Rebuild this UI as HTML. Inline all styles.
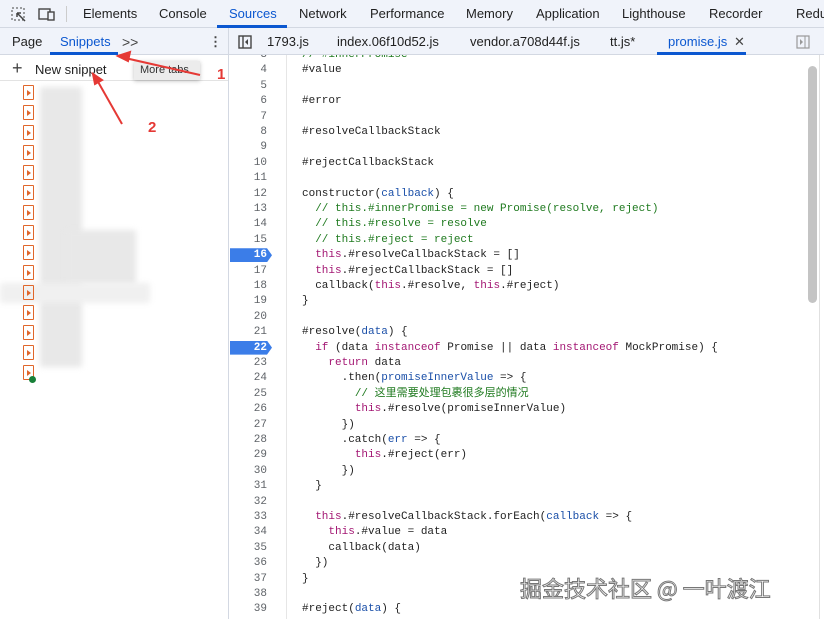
<!DOCTYPE html>
<html><head><meta charset="utf-8"><style>
*{box-sizing:border-box;margin:0;padding:0}
body{width:824px;height:619px;overflow:hidden;background:#fff;font-family:"Liberation Sans",Arial,sans-serif;font-size:13px;color:#1f1f1f;position:relative}
.top{position:absolute;left:0;top:0;width:824px;height:28px;background:#f0f3fa;border-bottom:1px solid #d3d8e2}
.top span{position:absolute;top:6px}
.sub{position:absolute;top:28px;height:27px;background:#f0f3fa;border-bottom:1px solid #d3d8e2}
.sub span{position:absolute;top:6px}
.left{position:absolute;left:0;top:55px;width:229px;height:564px;border-right:1px solid #d3d8e2}
.code{position:absolute;left:230px;top:55px;width:590px;height:564px;overflow:hidden;font-family:"Liberation Mono","Noto Sans CJK SC",monospace;font-size:11px;line-height:14px}
.ln{position:absolute;left:0;width:37px;text-align:right;color:#5f6368}
.tx{position:absolute;left:72px;white-space:pre;color:#1f1f1f;height:14px}
.k{color:#a31773}.c{color:#1f7a1f}.p{color:#1a4fa8}
.bp{position:absolute;left:0;width:42px;height:14px;background:#3b7de8;clip-path:polygon(0 0,37px 0,42px 50%,37px 100%,0 100%)}
.ic{position:absolute;left:23px;width:11px;height:15px;border:1.6px solid #e0662a;border-radius:1px}
.ic:after{content:"";position:absolute;left:3px;top:3.5px;border-left:4px solid #e0662a;border-top:3px solid transparent;border-bottom:3px solid transparent}
.blur{position:absolute;background:#e8e8e8;filter:blur(3px)}
</style></head><body>
<div class="top">
<svg style="position:absolute;left:11px;top:7px" width="16" height="15"><rect x="1" y="1" width="12" height="12" fill="none" stroke="#444" stroke-dasharray="2 2"/><path d="M6 6l8 8M6 6h4M6 6v4" stroke="#444" stroke-width="1.5" fill="none"/></svg>
<svg style="position:absolute;left:38px;top:7px" width="18" height="14"><rect x="1" y="2" width="11" height="10" fill="none" stroke="#444" stroke-width="1.4"/><rect x="10" y="5" width="6" height="8" fill="#f0f3fa" stroke="#444" stroke-width="1.4"/></svg>
<div style="position:absolute;left:66px;top:6px;width:1px;height:16px;background:#ccc"></div>
<span style="left:83px">Elements</span><span style="left:159px">Console</span><span style="left:229px;color:#0b57d0">Sources</span>
<div style="position:absolute;left:217px;top:25px;width:70px;height:3px;background:#0b57d0"></div>
<span style="left:299px">Network</span><span style="left:370px">Performance</span><span style="left:466px">Memory</span><span style="left:536px">Application</span><span style="left:622px">Lighthouse</span><span style="left:709px">Recorder</span><span style="left:796px">Redu</span>
</div>
<div class="sub" style="left:0;width:229px;border-right:1px solid #d3d8e2">
<span style="left:12px">Page</span><span style="left:60px;color:#0b57d0">Snippets</span>
<div style="position:absolute;left:50px;top:24px;width:68px;height:3px;background:#0b57d0"></div>
<span style="left:122px;font-size:14px;color:#444">&gt;&gt;</span>
<span style="left:209px;font-weight:bold;color:#444">⋮</span>
</div>
<div class="sub" style="left:229px;width:595px">
<svg style="position:absolute;left:9px;top:7px" width="14" height="14"><rect x="1" y="1" width="12" height="12" fill="none" stroke="#444" stroke-width="1.4"/><path d="M5 1v12" stroke="#444" stroke-width="1.4"/><path d="M10 4l-3 3 3 3z" fill="#444"/></svg>
<span style="left:38px">1793.js</span><span style="left:108px">index.06f10d52.js</span><span style="left:241px">vendor.a708d44f.js</span><span style="left:381px">tt.js*</span><span style="left:439px;color:#0b57d0">promise.js</span><span style="left:505px;color:#444">✕</span>
<div style="position:absolute;left:428px;top:24px;width:89px;height:3px;background:#0b57d0"></div>
<svg style="position:absolute;left:567px;top:7px" width="14" height="14"><rect x="1" y="1" width="12" height="12" fill="none" stroke="#999" stroke-width="1.2"/><path d="M9 1v12" stroke="#999"/><path d="M4 4l3 3-3 3z" fill="#999"/></svg>
</div>
<div class="left">
<div style="position:absolute;left:0;top:0;width:228px;height:26px;border-bottom:1px solid #e3e3e3"></div>
<span style="position:absolute;left:12px;top:3px;font-size:18px;color:#444">+</span>
<span style="position:absolute;left:35px;top:7px">New snippet</span>
<div style="position:absolute;left:134px;top:6px;width:66px;height:19px;background:#ececec;box-shadow:0 1px 4px rgba(0,0,0,.25);font-size:11px;padding:3px 6px;color:#333">More tabs</div>
<div class="blur" style="left:40px;top:32px;width:42px;height:280px"></div>
<div class="blur" style="left:66px;top:175px;width:70px;height:55px"></div>
<div class="blur" style="left:0;top:228px;width:150px;height:20px;background:#f0f0f0"></div>
<div class="ic" style="top:30px"></div><div class="ic" style="top:50px"></div><div class="ic" style="top:70px"></div><div class="ic" style="top:90px"></div><div class="ic" style="top:110px"></div><div class="ic" style="top:130px"></div><div class="ic" style="top:150px"></div><div class="ic" style="top:170px"></div><div class="ic" style="top:190px"></div><div class="ic" style="top:210px"></div><div class="ic" style="top:230px"></div><div class="ic" style="top:250px"></div><div class="ic" style="top:270px"></div><div class="ic" style="top:290px"></div><div class="ic" style="top:310px"></div>
<div style="position:absolute;left:29px;top:321px;width:7px;height:7px;border-radius:50%;background:#188038"></div>
</div>
<svg style="position:absolute;left:0;top:0" width="824" height="619"><g stroke="#e53935" stroke-width="2" fill="#e53935"><path d="M200 75L125 58" fill="none"/><path d="M118 56l12-4-2 9z"/><path d="M122 124L97 80" fill="none"/><path d="M93 74l9 6-7 4z"/></g><text x="217" y="79" fill="#e53935" font-family="Liberation Sans" font-weight="bold" font-size="15">1</text><text x="148" y="132" fill="#e53935" font-family="Liberation Sans" font-weight="bold" font-size="15">2</text></svg>
<div class="code" id="code">
<div style="position:absolute;left:56px;top:0;width:1px;height:564px;background:#e6e6e6"></div>
<div style="position:absolute;left:578px;top:11px;width:9px;height:237px;border-radius:5px;background:#c4c4c4"></div>
<div style="position:absolute;left:589px;top:0;width:1px;height:564px;background:#e0e0e0"></div>
</div>
<div style="position:absolute;left:520px;top:572px;font-family:'Noto Sans CJK SC',sans-serif;font-size:22px;color:#fff;-webkit-text-stroke:1px #777">掘金技术社区 @ 一叶渡江</div>
<script>
var L={3:'<span class="c">// #innerPromise</span>',4:'#value',6:'#error',8:'#resolveCallbackStack',10:'#rejectCallbackStack',
12:'constructor(<span class="p">callback</span>) {',13:'  <span class="c">// this.#innerPromise = new Promise(resolve, reject)</span>',14:'  <span class="c">// this.#resolve = resolve</span>',15:'  <span class="c">// this.#reject = reject</span>',
16:'  <span class="k">this</span>.#resolveCallbackStack = []',17:'  <span class="k">this</span>.#rejectCallbackStack = []',18:'  callback(<span class="k">this</span>.#resolve, <span class="k">this</span>.#reject)',19:'}',
21:'#resolve(<span class="p">data</span>) {',22:'  <span class="k">if</span> (data <span class="k">instanceof</span> Promise || data <span class="k">instanceof</span> MockPromise) {',23:'    <span class="k">return</span> data',24:'      .then(<span class="p">promiseInnerValue</span> => {',25:'        <span class="c">// 这里需要处理包裹很多层的情况</span>',26:'        <span class="k">this</span>.#resolve(promiseInnerValue)',27:'      })',28:'      .catch(<span class="p">err</span> => {',29:'        <span class="k">this</span>.#reject(err)',30:'      })',31:'  }',
33:'  <span class="k">this</span>.#resolveCallbackStack.forEach(<span class="p">callback</span> => {',34:'    <span class="k">this</span>.#value = data',35:'    callback(data)',36:'  })',37:'}',39:'#reject(<span class="p">data</span>) {'};
var h='';
for(var n=3;n<=40;n++){var t=-7+(n-3)*15.4;
if(n==16||n==22)h+='<div class="bp" style="top:'+t+'px"></div>';
h+='<div class="ln" style="top:'+t+'px;'+((n==16||n==22)?'color:#fff;font-weight:bold':'')+'">'+n+'</div>';
if(L[n])h+='<div class="tx" style="top:'+t+'px">'+L[n]+'</div>';}
document.getElementById('code').insertAdjacentHTML('afterbegin',h);
</script>
</body></html>
